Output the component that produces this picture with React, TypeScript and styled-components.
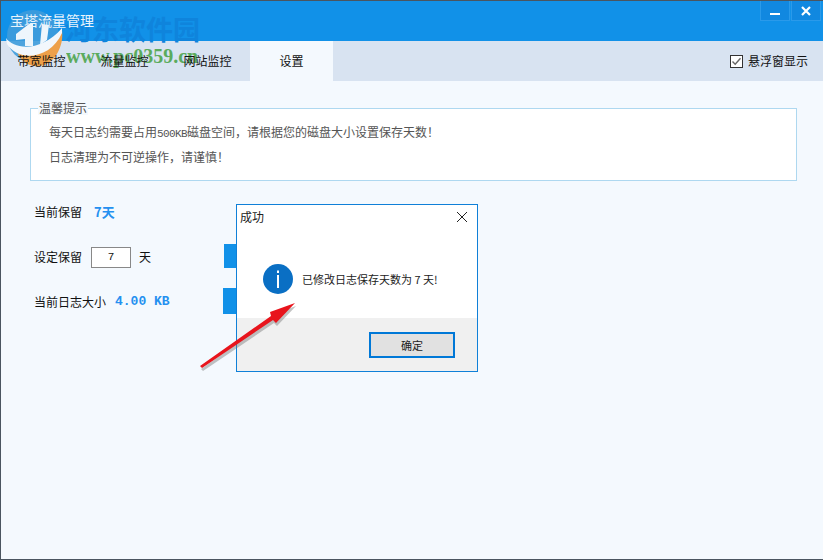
import React from 'react';
import styled, { createGlobalStyle } from 'styled-components';

const cjk = `"Noto Sans CJK SC", "Liberation Sans", sans-serif`;

const GlobalStyle = createGlobalStyle`
	html, body {
		margin: 0;
		padding: 0;
		overflow: hidden;
	}
	body {
		font-family: ${cjk};
		font-size: 12px;
		line-height: 16px;
	}
`;

const Win = styled.div`
	position: relative;
	width: 823px;
	height: 560px;
	box-sizing: border-box;
	padding-top: 1px;
	background: #f4f9fe;
	overflow: hidden;

	&::after {
		content: '';
		position: absolute;
		inset: 0;
		border-top: 1px solid #4a5560;
		border-left: 1px solid #4a5560;
		border-bottom: 1px solid #4a5560;
		pointer-events: none;
	}
`;

const Header = styled.header`
	display: flex;
	justify-content: space-between;
	align-items: flex-start;
	height: 40px;
	background: #1191e8;
`;

const Title = styled.h1`
	position: relative;
	z-index: 2;
	margin: 9px 0 0 10px;
	font-size: 14px;
	font-weight: 400;
	line-height: 20px;
	color: #e8f4fd;
`;

const WinControls = styled.div`
	display: flex;
	gap: 1px;
	margin-right: 2px;
`;

const WinButton = styled.button`
	display: flex;
	align-items: center;
	justify-content: center;
	width: 30px;
	height: 20px;
	padding: 0;
	background: #1188e0;
	border: 1px solid #2a9aea;
	border-top: none;
`;

const TabBar = styled.nav`
	display: flex;
	align-items: stretch;
	height: 40px;
	background: #d8e3f1;
`;

const Tab = styled.div<{ $active?: boolean }>`
	display: flex;
	align-items: center;
	justify-content: center;
	width: 83px;
	margin-left: ${(p) => (p.$active ? '1px' : '0')};
	color: #111;
	background: ${(p) => (p.$active ? '#f4f9fe' : 'transparent')};

	& > span {
		position: relative;
		z-index: 2;
	}
`;

const FloatOption = styled.label`
	display: flex;
	align-items: center;
	gap: 5px;
	margin-left: auto;
	margin-right: 15px;
	color: #111;
`;

const CheckBox = styled.span`
	display: flex;
	align-items: center;
	justify-content: center;
	box-sizing: border-box;
	width: 13px;
	height: 13px;
	background: #fff;
	border: 1px solid #333;
`;

const Content = styled.main`
	display: flex;
	flex-direction: column;
	padding: 20px 26px 0 30px;
`;

const Notice = styled.fieldset`
	box-sizing: border-box;
	height: 80px;
	margin: 0 0 18px;
	padding: 0 0 0 18px;
	background: #fff;
	border: 1px solid #aed8f0;
	display: flow-root;
`;

const NoticeTitle = styled.legend`
	margin-left: -11px;
	padding: 0 1px;
	color: #555;
	line-height: 14px;
	background: #f4f9fe;
`;

const NoticeLine = styled.p`
	margin: 0 0 9px;
	color: #555;
	line-height: 16px;
	&:first-of-type {
		margin-top: 9px;
	}
`;

const Latin = styled.span`
	font-family: "Liberation Mono", monospace;
	font-size: 11px;
	line-height: 10px;
	letter-spacing: -0.6px;
`;

const Row = styled.div`
	display: flex;
	align-items: center;
	height: 26px;
	margin: 0 0 19px 4px;
	color: #111;
`;

const Value = styled.span<{ $mono?: boolean }>`
	margin-left: ${(p) => (p.$mono ? '9px' : '12px')};
	color: #2490f0;
	font-weight: 700;
	font-size: 13px;
	font-family: ${(p) => (p.$mono ? `"Liberation Mono", monospace` : cjk)};
`;

const DaysInput = styled.span`
	display: flex;
	align-items: center;
	justify-content: center;
	box-sizing: border-box;
	width: 40px;
	height: 21px;
	margin: 0 8px 0 9px;
	background: #fff;
	border: 1px solid #888;
	font-family: "Liberation Mono", monospace;
	font-size: 11px;
`;

const HiddenButton = styled.div<{ $top: number; $height: number; $left: number }>`
	position: absolute;
	top: ${(p) => p.$top}px;
	left: ${(p) => p.$left}px;
	width: 20px;
	height: ${(p) => p.$height}px;
	background: #1191e8;
`;

const Dialog = styled.section`
	position: absolute;
	top: 204px;
	left: 236px;
	display: flex;
	flex-direction: column;
	box-sizing: border-box;
	width: 242px;
	height: 168px;
	background: #fff;
	border: 1px solid #0f80d8;
`;

const DialogTitle = styled.div`
	display: flex;
	align-items: center;
	justify-content: space-between;
	height: 23px;
	padding: 0 9px 0 3px;
	color: #222;
`;

const DialogBody = styled.div`
	display: flex;
	align-items: center;
	gap: 9px;
	height: 90px;
	padding: 12px 0 0 26px;
	box-sizing: border-box;
	color: #222;
	font-size: 11px;
`;

const DialogFooter = styled.div`
	display: flex;
	flex: 1;
	align-items: center;
	justify-content: flex-end;
	padding-right: 22px;
	background: #f0f0f0;
`;

const OkButton = styled.button`
	box-sizing: border-box;
	width: 86px;
	height: 26px;
	padding: 0;
	color: #222;
	font-family: ${cjk};
	font-size: 11px;
	background: #e1e1e1;
	border: 2px solid #0078d7;
`;

const Watermark = styled.div`
	position: absolute;
	top: 10px;
	left: 4px;
	z-index: 1;
	display: flex;
	align-items: flex-start;
	width: 200px;
	pointer-events: none;

	& > svg {
		flex: none;
	}
`;

const WatermarkText = styled.div`
	display: flex;
	flex: none;
	flex-direction: column;
	margin-left: 1px;
	font-family: "Liberation Serif", serif;
	font-weight: 700;
`;

const WatermarkName = styled.span`
	margin-top: 2px;
	color: #0f84dc;
	font-family: "Noto Sans CJK SC", serif;
	font-size: 27px;
	line-height: 33px;
`;

const WatermarkUrl = styled.span`
	margin-top: 1px;
	margin-left: 1px;
	color: #4ea64e;
	font-size: 20px;
	line-height: 20px;
	opacity: 0.9;
`;

const ArrowLayer = styled.svg`
	position: absolute;
	top: 295px;
	left: 195px;
	pointer-events: none;
`;

const tabs = ['带宽监控', '流量监控', '网站监控', '设置'];

const Logo = () => (
	<svg width="60" height="60" viewBox="0 0 60 60">
		<circle cx="29" cy="26" r="26" fill="#3f9cdc" opacity="0.9" />
		<path d="M13 42 C20 60 44 62 54 42 C57 36 59 30 58 20 L40 36Z" fill="#eda04a" />
		<path d="M2 28 C10 40 38 42 58 18 L58 23 C46 50 14 52 3 34Z" fill="#f2f7fc" />
		<path d="M12 30 L12 24 L25 14 L29 14 L29 36 L21 36 L21 29Z" fill="#eef6fc" />
		<path d="M38 14 L45 15 L43 30 L36 35Z" fill="#eef6fc" />
	</svg>
);

const App = () => (
	<Win>
		<GlobalStyle />
		<Header>
			<Title>宝塔流量管理</Title>
			<WinControls>
				<WinButton aria-label="最小化">
					<svg width="10" height="10" viewBox="0 0 10 10">
						<rect y="7" width="10" height="2" fill="#fff" />
					</svg>
				</WinButton>
				<WinButton aria-label="关闭">
					<svg width="10" height="10" viewBox="0 0 10 10">
						<path d="M1 1 L9 9 M9 1 L1 9" stroke="#fff" strokeWidth="2.2" />
					</svg>
				</WinButton>
			</WinControls>
		</Header>
		<TabBar>
			{tabs.map((t) => (
				<Tab key={t} $active={t === '设置'}>
					<span>{t}</span>
				</Tab>
			))}
			<FloatOption>
				<CheckBox>
					<svg width="11" height="11" viewBox="0 0 11 11">
						<path d="M1.5 5.5 L4.2 8.2 L9.5 2.2" fill="none" stroke="#666" strokeWidth="1.4" />
					</svg>
				</CheckBox>
				悬浮窗显示
			</FloatOption>
		</TabBar>
		<Content>
			<Notice>
				<NoticeTitle>温馨提示</NoticeTitle>
				<NoticeLine>
					每天日志约需要占用<Latin>500KB</Latin>磁盘空间，请根据您的磁盘大小设置保存天数！
				</NoticeLine>
				<NoticeLine>日志清理为不可逆操作，请谨慎！</NoticeLine>
			</Notice>
			<Row>
				当前保留
				<Value>7天</Value>
			</Row>
			<Row>
				设定保留
				<DaysInput>7</DaysInput>
				天
			</Row>
			<Row>
				当前日志大小
				<Value $mono>4.00 KB</Value>
			</Row>
		</Content>
		<HiddenButton $top={244} $height={24} $left={224} />
		<HiddenButton $top={288} $height={26} $left={223} />
		<Dialog>
			<DialogTitle>
				成功
				<svg width="12" height="12" viewBox="0 0 12 12">
					<path d="M1 1 L11 11 M11 1 L1 11" stroke="#222" strokeWidth="1" />
				</svg>
			</DialogTitle>
			<DialogBody>
				<svg width="30" height="30" viewBox="0 0 30 30">
					<circle cx="15" cy="15" r="15" fill="#0a6fc4" />
					<rect x="14" y="6.5" width="2" height="2.5" fill="#fff" />
					<rect x="14" y="11" width="2" height="13" fill="#fff" />
				</svg>
				已修改日志保存天数为 7 天!
			</DialogBody>
			<DialogFooter>
				<OkButton>确定</OkButton>
			</DialogFooter>
		</Dialog>
		<ArrowLayer width="110" height="80" viewBox="0 0 110 80">
			<path d="M5 71 L76 21 L75 17 L100 8 L81 28 L78 25 L7 73Z" fill="#7a7a7a" opacity="0.45" transform="translate(1 3)" />
			<path d="M5 71 L76 21 L75 17 L100 8 L81 28 L78 25 L7 73Z" fill="#e8141c" />
		</ArrowLayer>
		<Watermark>
			<Logo />
			<WatermarkText>
				<WatermarkName>河东软件园</WatermarkName>
				<WatermarkUrl>www.pc0359.cn</WatermarkUrl>
			</WatermarkText>
		</Watermark>
	</Win>
);

export default App;
